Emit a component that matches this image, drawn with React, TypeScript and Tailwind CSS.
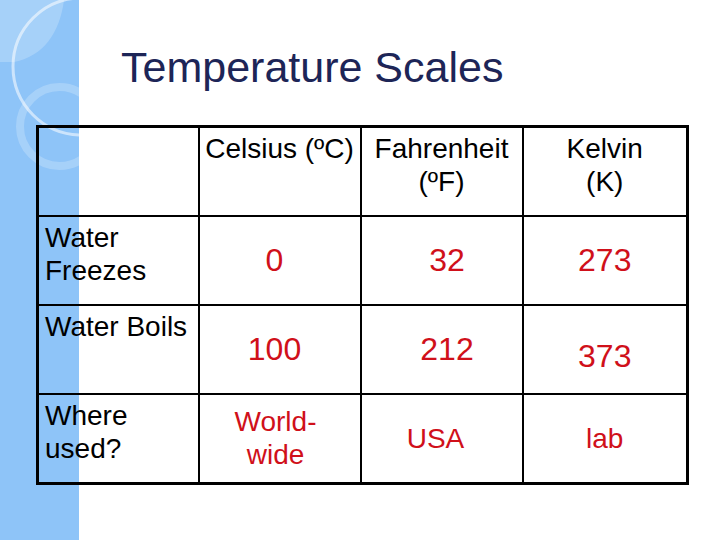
export default function App() {
  const red = "text-[#d0101a]"
  return (
    <main className="relative w-[720px] h-[540px] overflow-hidden bg-white font-['Liberation_Sans',Arial,sans-serif]">

      {/* Left decorative strip */}
      <svg className="absolute left-0 top-0" width="79" height="540" viewBox="0 0 79 540">
        <rect x="0" y="0" width="79" height="540" fill="#8ec4f8" />
        <path d="M0 0 H64 C60 32 44 56 14 62 H0 Z" fill="#ffffff" fillOpacity="0.22" />
        <circle cx="81.5" cy="66.5" r="68.5" fill="none" stroke="#ffffff" strokeOpacity="0.55" strokeWidth="3" />
        <circle cx="59.5" cy="126.5" r="39.5" fill="none" stroke="#ffffff" strokeOpacity="0.22" strokeWidth="8" />
      </svg>

      <div className="relative">

        {/* TITLE */}
        <h1 className="ml-[121px] pt-[46px] text-[43px] leading-none text-[#1d2557]">
          Temperature Scales
        </h1>

        {/* TABLE */}
        <table className="ml-[36px] mt-[36px] w-[650px] table-fixed border-collapse border-[3px] border-black text-[28px] leading-[33px] text-black">
          <colgroup>
            <col className="w-[161px]" />
            <col className="w-[162px]" />
            <col className="w-[162px]" />
            <col className="w-[165px]" />
          </colgroup>
          <tbody>
            <tr className="h-[89px]">
              <td className="border-2 border-black"></td>
              <td className="border-2 border-black align-top pt-[4px] text-center whitespace-nowrap">Celsius (ºC)</td>
              <td className="border-2 border-black align-top pt-[4px] text-center">Fahrenheit<br />(ºF)</td>
              <td className="border-2 border-black align-top pt-[4px] text-center">Kelvin<br />(K)</td>
            </tr>
            <tr className="h-[89px]">
              <td className="border-2 border-black align-top pt-[4px] pl-[6px]">Water<br />Freezes</td>
              <td className={`border-2 border-black text-center text-[32px] pr-[10px] ${red}`}>0</td>
              <td className={`border-2 border-black text-center text-[32px] pl-[11px] ${red}`}>32</td>
              <td className={`border-2 border-black text-center text-[32px] ${red}`}>273</td>
            </tr>
            <tr className="h-[89px]">
              <td className="border-2 border-black align-top pt-[4px] pl-[6px] whitespace-nowrap">Water Boils</td>
              <td className={`border-2 border-black text-center text-[32px] pr-[10px] ${red}`}>100</td>
              <td className={`border-2 border-black text-center text-[32px] pl-[11px] ${red}`}>212</td>
              <td className={`border-2 border-black text-center text-[32px] pt-[14px] ${red}`}>373</td>
            </tr>
            <tr className="h-[90px]">
              <td className="border-2 border-black align-top pt-[4px] pl-[6px]">Where<br />used?</td>
              <td className={`border-2 border-black text-center pr-[8px] ${red}`}>World-<br />wide</td>
              <td className={`border-2 border-black text-center pr-[12px] ${red}`}>USA</td>
              <td className={`border-2 border-black text-center ${red}`}>lab</td>
            </tr>
          </tbody>
        </table>

      </div>
    </main>
  )
}
